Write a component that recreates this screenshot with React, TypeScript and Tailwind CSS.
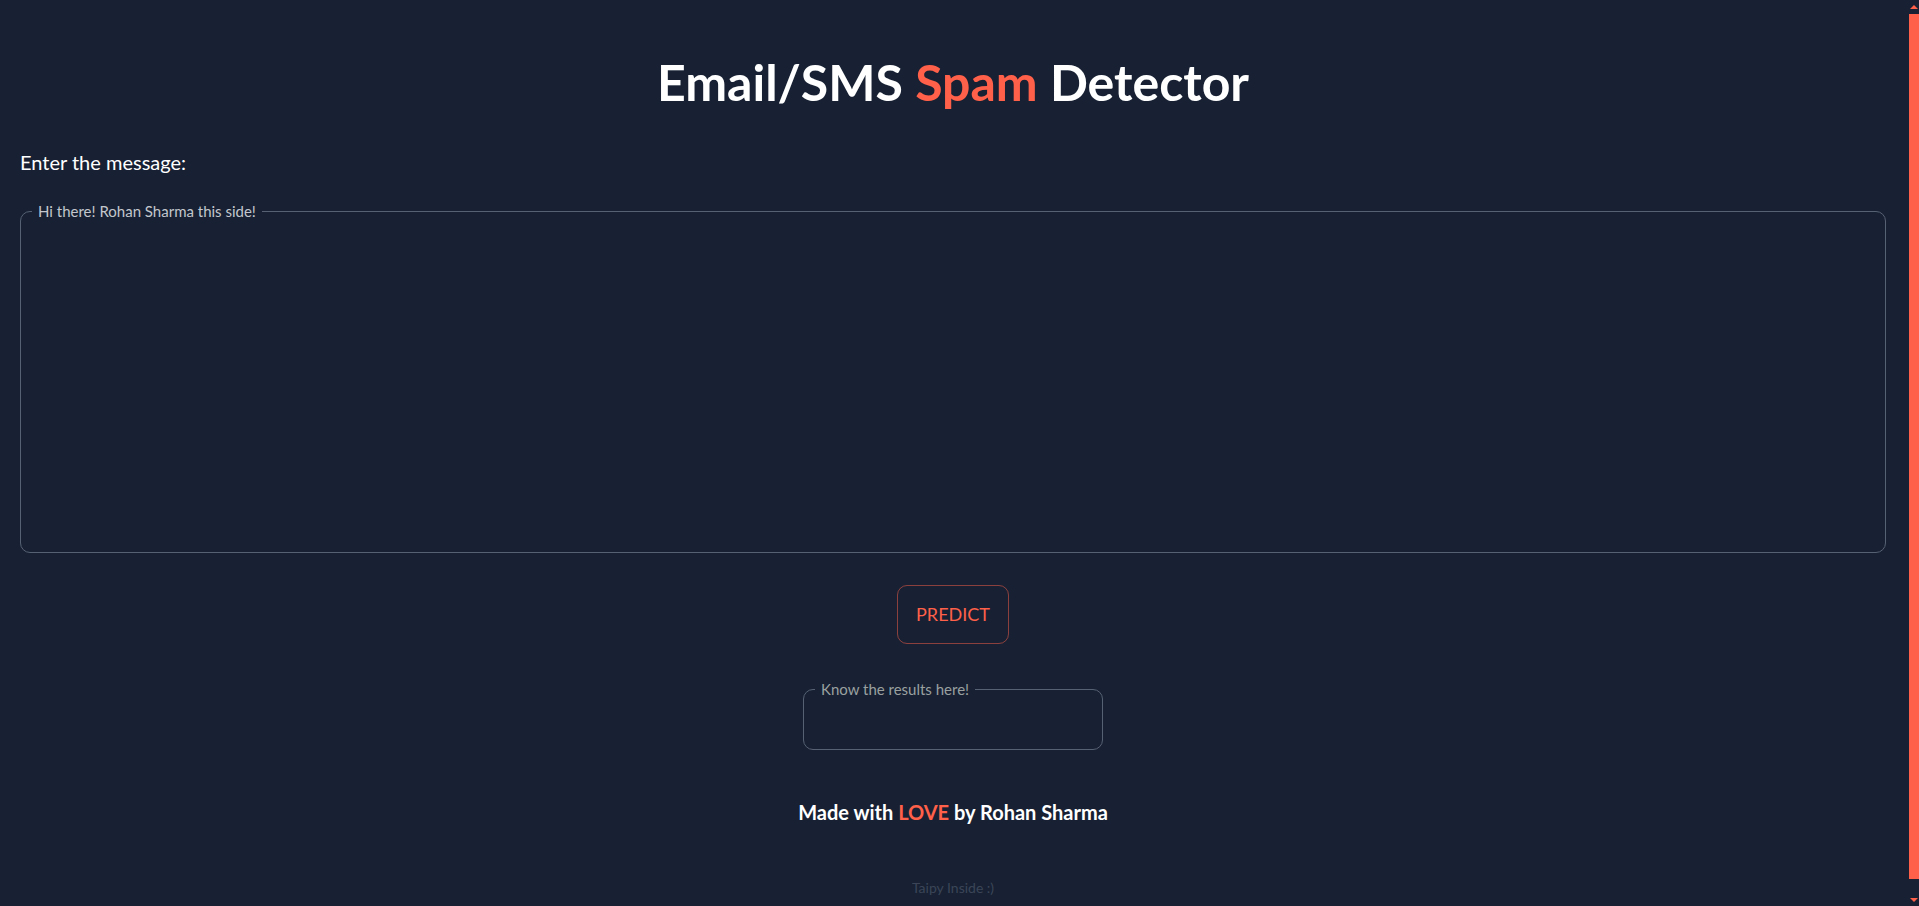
export default function App() {
  return (
    <div className="flex h-[906px] w-full overflow-hidden bg-[#172133] font-['Lato',sans-serif] text-white">
      <main className="flex min-w-0 flex-1 flex-col pl-5 pr-[18px]">
        <h1 className="mt-[52px] text-center text-[50px] font-bold leading-[60px]">
          Email/SMS <span className="text-[#ff6049]">Spam</span> Detector
        </h1>
        <p className="mt-[38px] text-[20px] leading-[24px]">Enter the message:</p>
        <fieldset className="mt-[28px] h-[351px] rounded-[10px] border border-[#566173]">
          <legend className="ml-[11px] px-[6px] text-[15px] leading-[18px] text-[#c3c7cd]">
            Hi there! Rohan Sharma this side!
          </legend>
        </fieldset>
        <div className="mt-[32px] flex justify-center">
          <button className="h-[59px] w-[112px] rounded-[10px] border border-[#ff6049]/50 text-[18px] font-normal text-[#ff6049]">
            PREDICT
          </button>
        </div>
        <div className="mt-[36px] flex justify-center">
          <fieldset className="h-[70px] w-[300px] rounded-[10px] border border-[#566173]">
            <legend className="ml-[11px] px-[6px] text-[15px] leading-[18px] text-[#9aa0a0]">
              Know the results here!
            </legend>
          </fieldset>
        </div>
        <p className="mt-[50px] text-center text-[20px] font-bold leading-[24px]">
          Made with <span className="text-[#ff6049]">LOVE</span> by Rohan Sharma
        </p>
        <p className="mt-[55px] text-center text-[14px] leading-[17px] text-[#3b4557]">Taipy Inside :)</p>
      </main>
      <aside className="flex w-[15px] flex-col items-end">
        <div className="flex h-[14px] w-[11px] items-center justify-center">
          <div className="h-0 w-0 border-x-[4px] border-b-[4px] border-x-transparent border-b-[#ff6049]" />
        </div>
        <div className="h-[865px] w-[10px] bg-[#ff6049]" />
        <div className="flex w-[11px] flex-1 items-end justify-center pb-[4px]">
          <div className="h-0 w-0 border-x-[4px] border-t-[4px] border-x-transparent border-t-[#ff6049]" />
        </div>
      </aside>
    </div>
  );
}
